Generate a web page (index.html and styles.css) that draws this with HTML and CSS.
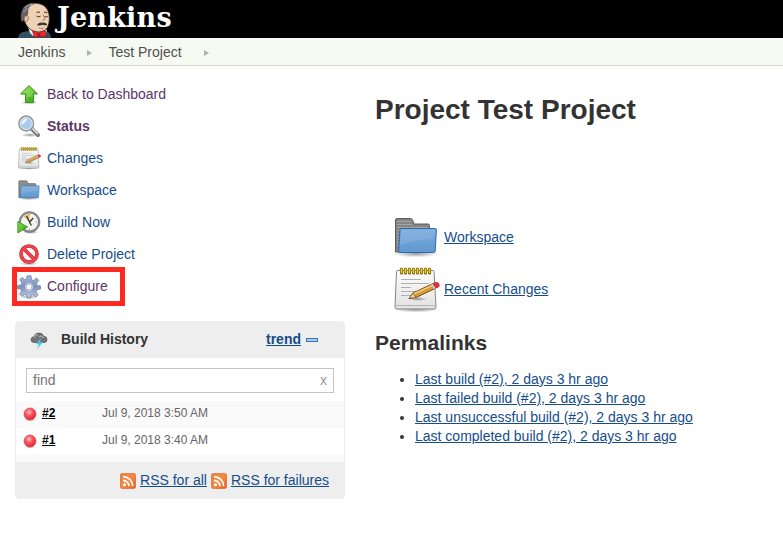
FILE: index.html
```
<!DOCTYPE html>
<html lang="en">
<head>
<meta charset="utf-8">
<title>Test Project [Jenkins]</title>
<link rel="stylesheet" href="styles.css">
</head>
<body>
<svg class="defs" aria-hidden="true">
  <defs>
    <linearGradient id="green" x2="1" y2="1"><stop stop-color="#8ee04a"/><stop offset="1" stop-color="#2c9f15"/></linearGradient>
    <linearGradient id="blue" x2="0" y2="1"><stop stop-color="#7aabdb"/><stop offset="1" stop-color="#6099d0"/></linearGradient>
    <linearGradient id="paper" x2="0" y2="1"><stop stop-color="#fdfdfd"/><stop offset="1" stop-color="#e2e2e2"/></linearGradient>
    <linearGradient id="steel" x2="0" y2="1"><stop stop-color="#a9b9d6"/><stop offset=".5" stop-color="#7d93bd"/><stop offset="1" stop-color="#c3cde0"/></linearGradient>
    <linearGradient id="orange" x2="1" y2="1"><stop stop-color="#ea8143"/><stop offset=".5" stop-color="#f58b3f"/><stop offset="1" stop-color="#e35c20"/></linearGradient>
    <radialGradient id="red" cx=".42" cy=".35" r=".65"><stop stop-color="#ffc4c4"/><stop offset=".45" stop-color="#ff5560"/><stop offset="1" stop-color="#e8202e"/></radialGradient>
    <radialGradient id="shade"><stop stop-color="#000" stop-opacity=".4"/><stop offset="1" stop-color="#000" stop-opacity="0"/></radialGradient>
    <symbol id="folder" viewBox="0 0 48 48">
      <ellipse cx="24" cy="40.500" rx="23" ry="4" fill="url(#shade)"/>
      <path d="M3.500 39V7q0-1.500 1.500-1.500h13.500q1.500 0 2 1.500l1.500 4H36q1.500 0 1.500 1.500V39z" fill="#858585" stroke="#5c5c5c"/>
      <path d="M5 8.500h14M5 11.500h15M5 14.500h31M5 17.500h4M5 20.500h4M5 23.500h4M5 26.500h4M5 29.500h4M5 32.500h3" stroke="#a5a5a5"/>
      <path d="M9 15.500h34.200q1.300 0 1.200 1.500l-1.200 21q-.1 1.500-1.500 1.500H8q-1.500 0-1.400-1.500L8 16.500q0-1 1-1z" fill="url(#blue)" stroke="#3068ad"/>
      <path d="M9 16.500h34l-.5 9Q24 26 8 32z" fill="#a0c5e8" opacity=".3"/>
    </symbol>
    <symbol id="notes" viewBox="0 0 48 48">
      <ellipse cx="24" cy="44.500" rx="22" ry="3" fill="url(#shade)"/>
      <path d="M5.500 5.500h35.500q1 0 1 1L44 42q0 2-2 2H5q-2 0-2-2L4.500 6.500q0-1 1-1z" fill="url(#paper)" stroke="#858585"/>
      <path d="M3.500 40.500h40" stroke="#b5b5b5"/>
      <path d="M9 14.500h20M9 18.500h28M9 22.500h10M9 26.500h18M9 30.500h10" stroke="#b0b0b0" stroke-width="1.200"/>
      <path d="M9.500 4v4M13.500 4v4M17.500 4v4M21.500 4v4M25.500 4v4M29.500 4v4M33.500 4v4M37.500 4v4" stroke="#796000" stroke-width="3.200" stroke-linecap="round"/>
      <path d="M9.500 4v3.500M13.500 4v3.500M17.500 4v3.500M21.500 4v3.500M25.500 4v3.500M29.500 4v3.500M33.500 4v3.500M37.500 4v3.500" stroke="#f0ce35" stroke-width="1.700" stroke-linecap="round"/>
      <ellipse cx="26" cy="34" rx="9" ry="2" fill="url(#shade)"/>
      <path d="M17 33.500L21 28 41 18.500l3 4.500L24 32.500z" fill="#d99b3c" stroke="#714a12"/>
      <path d="M21.500 29L40 20.500" stroke="#f2c778" stroke-width="1.500"/>
      <path d="M17 33.500L21 28l3 4.500z" fill="#ecd3a4" stroke="#714a12" stroke-width=".7"/>
      <path d="M39 19.500l2-1 3 4.500-2 1z" fill="#ccc"/>
      <path d="M41 18.500q4.500-2.500 6 .5t-3 4z" fill="#ee2638" stroke="#a93644" stroke-width=".7"/>
    </symbol>
    <symbol id="rss" viewBox="0 0 16 16">
      <rect x=".4" y=".4" width="15.200" height="15.200" rx="2" fill="url(#orange)" stroke="#d9632b" stroke-width=".7"/>
      <circle cx="4.500" cy="11.700" r="1.500" fill="#fff"/>
      <path d="M3 7.300a6 6 0 0 1 6 6M3 3.600a9.700 9.700 0 0 1 9.700 9.700" fill="none" stroke="#fff" stroke-width="1.700"/>
    </symbol>
    <symbol id="ball" viewBox="0 0 14 15">
      <ellipse cx="7" cy="12.800" rx="5.500" ry="1.500" fill="url(#shade)"/>
      <circle cx="7" cy="7" r="6" fill="url(#red)" stroke="#cf4a52" stroke-width=".7"/>
    </symbol>
  </defs>
</svg>

<header class="header">
  <svg class="butler" viewBox="0 0 34 38">
    <path d="M0 38q1-5 5-6l6-1 8 3 8-3q6 1 6 7z" fill="#335061"/>
    <path d="M10 27l2 6 3 3h12l2-6-4-3z" fill="#f2f2f2"/>
    <path d="M7 22C3 12 6 3.300 17 3.300c10 0 14 6 14.300 14C31.500 26 29 31.500 21 32c-7 0-12-4-14-10z" fill="#efd2b5" stroke="#2b2320" stroke-width=".8"/>
    <path d="M4 22Q2 18 3.500 12 5 4 14 3c3-.3 5 .2 7 1.200-6-.5-9 1-10.500 4.800-.8 2 .5 4-1 6.500Q7 20 4 22z" fill="#666264"/>
    <path d="M7 8q3-3.300 7-3.700M5.500 12q2-3 4-3.500" stroke="#aaa" fill="none"/>
    <path d="M6.500 16.500q3.500-2 4 1t-3 5q-2-2-1-6z" fill="#ecc3a2" stroke="#6b5143" stroke-width=".6"/>
    <path d="M18.500 12.500q2-1.300 3.500 0M26 12.500q2-1 3.500.5M18.500 16q2 1.700 4 .2M26.500 16.500q1.800 1 3.300 0" fill="none" stroke="#3c2c24"/>
    <path d="M25 14.500l2 4.500q0 1.500-2.500 1M21 28q3 1.200 5-.2" fill="none" stroke="#9c7058" stroke-width=".8"/>
    <path d="M19 25q2-3.500 5-2.300 3.500-.7 5.500 2-2.500 1-5 0-2.500 1.500-5.500.3z" fill="#393634"/>
    <path d="M14.500 31q4 0 6 2.200 3-2.700 7-2.400v6.700l-6-1.500-5 2z" fill="#ed2630" stroke="#7f141b" stroke-width=".6"/>
    <path d="M19.500 32.500l2.800.2v3.300l-2.800.2z" fill="#a91420"/>
  </svg>
  <span class="wordmark">Jenkins</span>
</header>

<nav class="crumbs">
  <span>Jenkins</span><i class="arrow"></i><span>Test Project</span><i class="arrow"></i>
</nav>

<div class="page">
  <aside class="side">
    <ul class="tasks">
      <li><svg viewBox="0 0 24 24"><ellipse cx="12.500" cy="20.500" rx="9" ry="2" fill="url(#shade)"/><path d="M12 3.500l8.500 8.500h-4v8.500h-8V12h-5z" fill="url(#green)" stroke="#3c971d"/><path d="M12 5l5.500 6h-2v4q-4-1-6 1v-5h-4z" fill="#bdf488" opacity=".35"/></svg><a class="visited">Back to Dashboard</a></li>
      <li><svg viewBox="0 0 24 24"><ellipse cx="13" cy="21" rx="9" ry="2" fill="url(#shade)"/><path d="M14.500 14.500l6.500 6.500" stroke="#777" stroke-width="4" stroke-linecap="round"/><path d="M15 14l6 6" stroke="#d5d5d5" stroke-width="1.800"/><circle cx="9.200" cy="9.500" r="7.300" fill="#a9c9ed" stroke="#969a9b" stroke-width="1.700"/><circle cx="9.200" cy="9.500" r="6" fill="#a7caee" stroke="#e9eef2" stroke-width="1"/><path d="M4.500 11q-.5-6 6-6.500-1.500 4-6 6.500z" fill="#e8f3fc"/></svg><a class="visited current">Status</a></li>
      <li><svg><use href="#notes"/></svg><a>Changes</a></li>
      <li><svg><use href="#folder"/></svg><a>Workspace</a></li>
      <li><svg viewBox="0 0 24 24"><ellipse cx="14" cy="22" rx="8" ry="2" fill="url(#shade)"/><circle cx="12.500" cy="12" r="9.500" fill="#f2f2ee" stroke="#868995" stroke-width="2"/><circle cx="12.500" cy="12" r="10.500" fill="none" stroke="#5e616a" stroke-width=".5"/><path d="M12.500 12L6 6Q8.500 4 12.500 4z" fill="#e9c75c"/><path d="M9.500 6l3.200 6 3.500-4M12.500 12.500l2 3" fill="none" stroke="#34363b" stroke-width="1.300"/><path d="M12.500 4v1M20 12h-1M12.500 20v-1" stroke="#888"/><path d="M.8 11.500l9.700 5.500-9.700 6z" fill="url(#green)" stroke="#318b20" stroke-width=".8"/></svg><a>Build Now</a></li>
      <li><svg viewBox="0 0 24 24"><ellipse cx="12" cy="21.500" rx="9" ry="2" fill="url(#shade)"/><circle cx="12" cy="12" r="8" fill="#f7f7f7" stroke="#c42028" stroke-width="3.600"/><path d="M6.500 6.500l11 11" stroke="#c42028" stroke-width="3.600"/><circle cx="12" cy="12" r="8" fill="none" stroke="#ef4650" stroke-width="2.300"/><path d="M6.500 6.500l11 11" stroke="#ef4650" stroke-width="2.300"/></svg><a>Delete Project</a></li>
      <li class="marked"><svg viewBox="0 0 24 24"><ellipse cx="12" cy="22" rx="9" ry="2" fill="url(#shade)"/><path fill-rule="evenodd" d="M10 .8h4l.5 4 2 .8 3-2.600 2.300 2.300-2.400 3.200.8 2 3.300.4v3.200l-3.500.6-.9 2 2 3-2.200 2.300-3.200-2.200-1.800.8-.6 2.400h-2.800l-.7-2.700-2-.9-2.900 2L2.600 19l2-2.900-.8-2-3.300-.4v-3.200l3.500-.6.9-2-2.200-3.200L5 2.400l3 2.400 1.500-.6zM12 9a3 3 0 1 0 .01 0z" fill="url(#steel)" stroke="#7183a6" stroke-width=".8"/><circle cx="12" cy="12" r="3.500" fill="none" stroke="#d7deea"/></svg><a class="visited">Configure</a></li>
    </ul>

    <section class="history">
      <div class="history-head">
        <svg class="storm" viewBox="0 0 18 17"><path d="M4 10.500Q.8 10.200 1 7.500 1.300 5 4 4.500q1-3.500 5-3.500 3.500 0 4.500 3Q17 4.500 17 7.500t-3 3z" fill="#737373" stroke="#555" stroke-width=".8"/><path d="M4 5.500q1-3 4-2.500M9 5q3-2 4.500 1" fill="none" stroke="#aaa" stroke-width="1.300"/><path d="M10.500 7L6 12l3 .2L7.500 16.500l5-6-3-.2z" fill="#35c6f5" stroke="#67d8fb" stroke-width=".4"/></svg>
        <b>Build History</b><a class="trend">trend</a><i class="collapse"></i>
      </div>
      <div class="search"><span>find</span><span class="clear">x</span></div>
      <div class="build odd"><svg><use href="#ball"/></svg><a>#2</a><time>Jul 9, 2018 3:50 AM</time></div>
      <div class="build"><svg><use href="#ball"/></svg><a>#1</a><time>Jul 9, 2018 3:40 AM</time></div>
      <div class="spacer"></div>
      <div class="feeds"><svg><use href="#rss"/></svg><a>RSS for all</a><svg><use href="#rss"/></svg><a>RSS for failures</a></div>
    </section>
  </aside>

  <main class="main">
    <h1>Project Test Project</h1>
    <div class="shortcut"><svg><use href="#folder"/></svg><a>Workspace</a></div>
    <div class="shortcut"><svg><use href="#notes"/></svg><a>Recent Changes</a></div>
    <h2>Permalinks</h2>
    <ul class="links">
      <li><a>Last build (#2), 2 days 3 hr ago</a></li>
      <li><a>Last failed build (#2), 2 days 3 hr ago</a></li>
      <li><a>Last unsuccessful build (#2), 2 days 3 hr ago</a></li>
      <li><a>Last completed build (#2), 2 days 3 hr ago</a></li>
    </ul>
  </main>
</div>
</body>
</html>
```
FILE: styles.css
```
* { box-sizing: border-box; }
body { margin: 0; background: #fff; color: #333; font: 14px/19px "Liberation Sans", Arial, sans-serif; overflow: hidden; }
svg { display: block; flex: none; }
.defs { width: 0; height: 0; position: absolute; }
ul { margin: 0; padding: 0; list-style: none; }
a { color: #154d88; }

.header { height: 38px; background: #000; display: flex; padding-left: 18px; }
.butler { width: 34px; height: 38px; }
.wordmark { margin-left: 5px; color: #fff; font: bold 27px/35px "DejaVu Serif", serif; letter-spacing: .2px; }

.crumbs { height: 28px; background: #f6faf2; border-bottom: 1px solid #d3d7cf; display: flex; align-items: center; padding: 2px 0 0 18px; color: #4f4f4f; }
.arrow { border: 3.5px solid transparent; border-left: 5px solid #b0b2ae; border-right: 0; margin: 0 16px 0 22px; }

.page { display: flex; }
.side { width: 345px; padding: 12px 0 0 15px; flex: none; }
.tasks li { height: 32px; display: flex; align-items: center; padding-left: 2px; }
.tasks svg { width: 24px; height: 24px; margin-right: 6px; }
.tasks .visited { color: #5c3566; }
.current { font-weight: bold; }
.tasks .marked { width: 113px; height: 39px; margin: -3px 0 0 -3px; border: 5px solid #fc2a20; padding-left: 0; }

.history { width: 330px; height: 178px; margin-top: 15px; border: 1px solid #eee; border-radius: 4px; overflow: hidden; }
.history-head { height: 36px; background: #eee; display: flex; align-items: center; padding: 0 0 2px 14px; }
.storm { width: 18px; height: 17px; margin: 2px 13px 0 0; }
.history-head b { width: 205px; }
.trend { font-weight: bold; text-decoration: underline; }
.collapse { width: 12px; height: 4px; margin: 2px 0 0 5px; background: #a9cff3; border: 1px solid #3b77b5; }
.search { height: 25px; margin: 10px 10px 8px; border: 1px solid #c4c4c4; display: flex; align-items: center; justify-content: space-between; padding: 0 6px; color: #757575; }
.clear { color: #999; }
.build { height: 27px; display: flex; align-items: center; padding: 0 0 3px 7px; font-size: 12px; }
.odd, .spacer { background: #fafafa; }
.build svg { width: 14px; height: 15px; margin: 3px 5px 0 0; }
.build a { width: 60px; color: #000; font-weight: bold; text-decoration: underline; }
.build time { color: #666; }
.spacer { height: 7px; }
.feeds { height: 37px; background: #eee; display: flex; align-items: center; justify-content: flex-end; gap: 4px; padding-right: 15px; }
.feeds svg { width: 16px; height: 16px; }
.feeds a, .shortcut a, .links a { text-decoration: underline; }

.main { padding: 28px 0 0 30px; }
h1 { margin: 0 0 85px; font-size: 28px; line-height: 32px; }
.shortcut { height: 52px; display: flex; align-items: center; padding-left: 17px; }
.shortcut svg { width: 48px; height: 48px; margin-right: 4px; }
h2 { margin: 16px 0 15px; font-size: 21px; line-height: 24px; }
.links { list-style: disc; padding-left: 40px; }
```
